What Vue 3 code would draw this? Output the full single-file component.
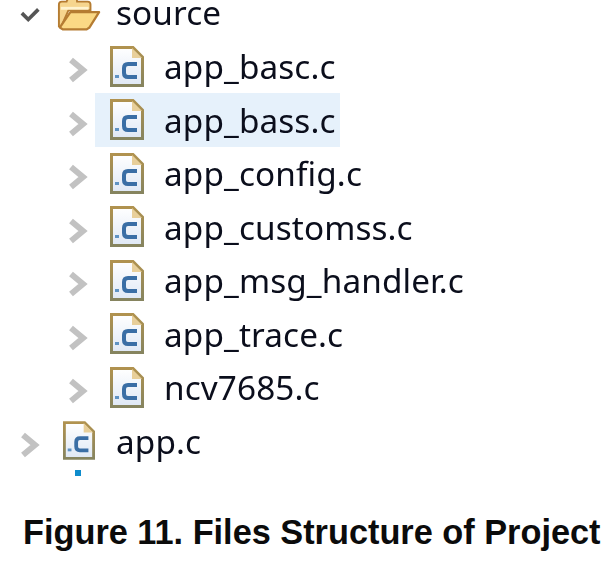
<script setup>
const files = ['app_basc.c', 'app_bass.c', 'app_config.c', 'app_customss.c', 'app_msg_handler.c', 'app_trace.c', 'ncv7685.c']
</script>

<template>
  <div class="page">
    <ul class="tree">
      <li class="row root">
        <svg class="twist" width="22" height="20" viewBox="0 0 24 20">
          <path d="M2 9 L9 16 L20 5" fill="none" stroke="#555" stroke-width="4" />
        </svg>
        <svg class="folder" width="44" height="36" viewBox="0 0 46 36">
          <path d="M2 30 V7 Q2 4 5 4 H10 Q11 0 15 0 H18 Q21 0 21 4 H32 Q35 4 35 7 V13 H12 L4 31 Z" fill="#f6d58e" stroke="#b57c32" stroke-width="2" />
          <path d="M4 11 H33" stroke="#fff3cf" stroke-width="3" />
          <path d="M3 31 L14 15 H44 L34 31 L31 33 H6 Z" fill="#fbd985" stroke="#b57c32" stroke-width="2.4" stroke-linejoin="round" />
        </svg>
        <span class="name">source</span>
      </li>
      <li v-for="(f, i) in files" :key="f" class="row child" :class="{ selected: i === 1 }">
        <svg class="chev" width="20" height="28" viewBox="0 0 20 28">
          <path d="M3 4 L15 14 L3 24" fill="none" stroke="#c2c2c2" stroke-width="6" />
        </svg>
        <svg class="file" width="34" height="41" viewBox="0 0 34 41">
          <defs>
            <linearGradient :id="'p' + i" x1="0" y1="0" x2="0" y2="1">
              <stop offset="0" stop-color="#fff" />
              <stop offset="1" stop-color="#dfe8f5" />
            </linearGradient>
            <linearGradient :id="'b' + i" x1="0" y1="0" x2="0" y2="1">
              <stop offset="0" stop-color="#b0924f" />
              <stop offset="1" stop-color="#86845f" />
            </linearGradient>
          </defs>
          <path d="M1.5 1.5 H23 L32.5 11 V39.5 H1.5 Z" :fill="'url(#p' + i + ')'" :stroke="'url(#b' + i + ')'" stroke-width="3" />
          <path d="M22 2 L32 12 H22 Z" fill="#e8cf9a" />
          <rect x="5" y="29" width="4" height="3" fill="#5f93c4" />
          <path d="M27 18 H18 Q14 18 14 22 V27 Q14 31 18 31 H27" fill="none" stroke="#3a6ea5" stroke-width="4" />
        </svg>
        <span class="name">{{ f }}</span>
      </li>
      <li class="row top">
        <svg class="chev" width="20" height="28" viewBox="0 0 20 28">
          <path d="M3 4 L15 14 L3 24" fill="none" stroke="#c2c2c2" stroke-width="6" />
        </svg>
        <svg class="file" width="32" height="41" viewBox="0 0 34 41">
          <defs>
            <linearGradient id="pt" x1="0" y1="0" x2="0" y2="1">
              <stop offset="0" stop-color="#fff" />
              <stop offset="1" stop-color="#dfe8f5" />
            </linearGradient>
            <linearGradient id="bt" x1="0" y1="0" x2="0" y2="1">
              <stop offset="0" stop-color="#b0924f" />
              <stop offset="1" stop-color="#86845f" />
            </linearGradient>
          </defs>
          <path d="M1.5 1.5 H23 L32.5 11 V39.5 H1.5 Z" fill="url(#pt)" stroke="url(#bt)" stroke-width="3" />
          <path d="M22 2 L32 12 H22 Z" fill="#e8cf9a" />
          <rect x="5" y="29" width="4" height="3" fill="#5f93c4" />
          <path d="M27 18 H18 Q14 18 14 22 V27 Q14 31 18 31 H27" fill="none" stroke="#3a6ea5" stroke-width="4" />
        </svg>
        <span class="name">app.c</span>
      </li>
    </ul>
    <div class="dot"></div>
    <p class="caption">Figure 11. Files Structure of Project</p>
  </div>
</template>

<style scoped>
.page {
  width: 609px;
  height: 567px;
  overflow: hidden;
  background: #fff;
}
.tree {
  list-style: none;
  margin: -14px 0 0;
  padding: 0;
  display: flex;
  flex-direction: column;
  filter: blur(0.45px);
}
.row {
  height: 53.5px;
  display: flex;
  align-items: center;
  font-family: "Noto Sans", "Open Sans", sans-serif;
  font-size: 33.3px;
  letter-spacing: 0.12px;
  color: #0b0e1c;
  position: relative;
}
.name {
  line-height: 26px;
}
.chev {
  margin-top: 8px;
}
.root { padding-left: 20px; }
.twist { margin-top: 2px; }
.folder { margin-left: 15px; margin-top: 4px; }
.root .name { margin-left: 15px; margin-top: -2px; }
.child { padding-left: 68px; }
.child .file { margin-left: 22px; }
.child .name { margin-left: 20px; }
.top { padding-left: 20px; }
.top .file { margin-left: 23px; }
.top .name { margin-left: 21px; }
.selected::before {
  content: "";
  position: absolute;
  left: 95px;
  top: 0;
  width: 245px;
  height: 100%;
  background: #e6f1fb;
}
.selected > * { position: relative; }
.dot {
  width: 6px;
  height: 6px;
  margin: 2px 0 0 75px;
  background: #0e8ccc;
}
.caption {
  margin: 36px 0 0 23px;
  font-family: "Liberation Sans", Arial, sans-serif;
  font-weight: 700;
  font-size: 34.3px;
  line-height: 40px;
  color: #0b0b0b;
  white-space: nowrap;
}
</style>
